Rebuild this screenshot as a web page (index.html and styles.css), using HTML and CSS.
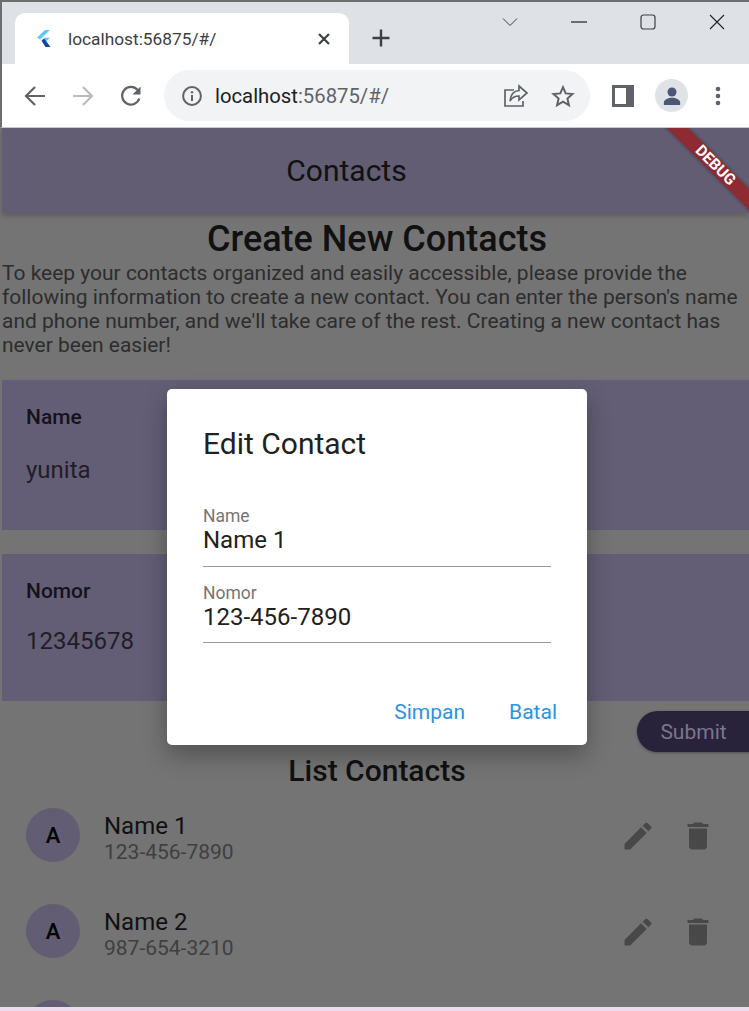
FILE: index.html
```html
<!DOCTYPE html>
<html>
  <head>
    <meta name="viewport" content="width=device-width,initial-scale=1.0">
    <title>localhost:56875/#/</title>
    <link rel="stylesheet" href="styles.css">
  </head>
  <body>
    <div class="window">
      <!-- tab strip -->
      <div class="tabstrip">
        <div class="tab">
          <svg class="favicon" width="14" height="18" viewBox="0 0 14 18">
            <polygon points="8,0 13,0 3,9.500 0,7.500" fill="#5cc8f8"/>
            <polygon points="8,7.800 13,7.800 7.500,13 4.500,10.800" fill="#5cc8f8"/>
            <polygon points="4.500,10.800 7.200,8.600 13.500,17 8.500,17" fill="#0d47a1"/>
          </svg>
          <span class="tab-title">localhost:56875/#/</span>
          <svg class="tab-close" width="14" height="14" viewBox="0 0 14 14">
            <path d="M2 2l10 10M12 2L2 12" stroke="#3c4043" stroke-width="2.2" fill="none"/>
          </svg>
        </div>
        <svg class="new-tab" width="20" height="20" viewBox="0 0 20 20">
          <path d="M10 1.500v17M1.500 10h17" stroke="#3c4043" stroke-width="2.400" fill="none"/>
        </svg>
        <div class="window-controls">
          <svg width="16" height="10" viewBox="0 0 16 10"><path d="M1 1.500l7 7 7-7" stroke="#3c4043" fill="none"/></svg>
          <svg width="16" height="2" viewBox="0 0 16 2"><path d="M0 1h16" stroke="#202124" stroke-width="1.200"/></svg>
          <svg width="16" height="16" viewBox="0 0 16 16"><rect x="1" y="1" width="14" height="14" rx="2.500" stroke="#3c4043" stroke-width="1.200" fill="none"/></svg>
          <svg width="16" height="16" viewBox="0 0 16 16"><path d="M1 1l14 14M15 1L1 15" stroke="#202124" stroke-width="1.100" fill="none"/></svg>
        </div>
      </div>

      <!-- toolbar -->
      <div class="toolbar">
        <svg class="nav-icon" width="24" height="24" viewBox="0 0 24 24"><path d="M22 12H3.500M12 3l-9 9 9 9" stroke="#5f6368" stroke-width="2.200" fill="none"/></svg>
        <svg class="nav-icon" width="24" height="24" viewBox="0 0 24 24"><path d="M2 12h18.500M12 3l9 9-9 9" stroke="#b9bbbe" stroke-width="2.200" fill="none"/></svg>
        <svg class="nav-icon" width="24" height="24" viewBox="0 0 24 24"><path d="M20.300 14.500A8.800 8.800 0 1 1 18.600 6" stroke="#5f6368" stroke-width="2.200" fill="none"/><path d="M21.500 2.500v8h-8z" fill="#5f6368"/></svg>
        <div class="omnibox">
          <svg width="22" height="22" viewBox="0 0 22 22"><circle cx="11" cy="11" r="8.900" stroke="#5f6368" stroke-width="2" fill="none"/><path d="M11 10v6" stroke="#5f6368" stroke-width="2"/><circle cx="11" cy="7.200" r="1.200" fill="#5f6368"/></svg>
          <span class="url"><span class="url-host">localhost</span>:56875/#/</span>
          <svg class="share" width="26" height="24" viewBox="0 0 26 24"><path d="M11 6H2v16h18v-5" stroke="#5f6368" stroke-width="1.700" fill="none"/><path d="M16 2l8 7-8 7v-4c-4.500 0-7 1.500-9 5 .500-6 3.500-10 9-10.500z" stroke="#5f6368" stroke-width="1.700" fill="none"/></svg>
          <svg class="star" width="24" height="24" viewBox="0 0 24 24"><path d="M12 3.200l2.700 6.200 6.800.6-5.100 4.500 1.500 6.600-5.900-3.500-5.900 3.500 1.500-6.600-5.100-4.500 6.800-.6z" stroke="#5f6368" stroke-width="2" fill="none"/></svg>
        </div>
        <svg class="side-panel" width="22" height="22" viewBox="0 0 22 22"><path d="M0 0h22v22H0z" fill="#5f6368"/><path d="M3 3h11v16H3z" fill="#fff"/></svg>
        <div class="profile">
          <svg width="20" height="18" viewBox="0 0 22 20"><circle cx="11" cy="5.500" r="5" fill="#4b5a73"/><path d="M2 20v-3c0-3 5-5 9-5s9 2 9 5v3z" fill="#4b5a73"/></svg>
        </div>
        <svg class="menu" width="6" height="20" viewBox="0 0 6 20"><circle cx="3" cy="3" r="2.300" fill="#5f6368"/><circle cx="3" cy="10" r="2.300" fill="#5f6368"/><circle cx="3" cy="17" r="2.300" fill="#5f6368"/></svg>
      </div>

      <!-- flutter app, dimmed by the dialog barrier -->
      <div class="app">
        <header class="appbar">
          <span class="appbar-title">Contacts</span>
        </header>
        <div class="debug-corner"><div class="debug-ribbon">DEBUG</div></div>

        <h1 class="page-title">Create New Contacts</h1>
        <p class="intro">To keep your contacts organized and easily accessible, please provide the<br>following information to create a new contact. You can enter the person's name<br>and phone number, and we'll take care of the rest. Creating a new contact has<br>never been easier!</p>

        <div class="field-card field-card-name">
          <div class="field-label">Name</div>
          <div class="field-value">yunita</div>
        </div>
        <div class="field-card field-card-number">
          <div class="field-label">Nomor</div>
          <div class="field-value">12345678</div>
        </div>

        <div class="submit-row"><button class="submit-btn">Submit</button></div>

        <h2 class="list-title">List Contacts</h2>
        <ul class="contacts">
          <li class="contact">
            <div class="avatar">A</div>
            <div class="contact-text">
              <div class="contact-name">Name 1</div>
              <div class="contact-phone">123-456-7890</div>
            </div>
            <svg class="icon-edit" width="36" height="36" viewBox="0 0 24 24"><path d="M3 17.250V21h3.750L17.810 9.940l-3.750-3.750zM20.710 7.040a1 1 0 0 0 0-1.410l-2.340-2.340a1 1 0 0 0-1.410 0l-1.830 1.830 3.750 3.750z" fill="#484848"/></svg>
            <svg class="icon-delete" width="36" height="36" viewBox="0 0 24 24"><path d="M6 19c0 1.100.9 2 2 2h8c1.100 0 2-.9 2-2V7H6zM19 4h-3.500l-1-1h-5l-1 1H5v2h14z" fill="#484848"/></svg>
          </li>
          <li class="contact">
            <div class="avatar">A</div>
            <div class="contact-text">
              <div class="contact-name">Name 2</div>
              <div class="contact-phone">987-654-3210</div>
            </div>
            <svg class="icon-edit" width="36" height="36" viewBox="0 0 24 24"><path d="M3 17.250V21h3.750L17.810 9.940l-3.750-3.750zM20.710 7.040a1 1 0 0 0 0-1.410l-2.340-2.340a1 1 0 0 0-1.410 0l-1.830 1.830 3.750 3.750z" fill="#484848"/></svg>
            <svg class="icon-delete" width="36" height="36" viewBox="0 0 24 24"><path d="M6 19c0 1.100.9 2 2 2h8c1.100 0 2-.9 2-2V7H6zM19 4h-3.500l-1-1h-5l-1 1H5v2h14z" fill="#484848"/></svg>
          </li>
          <li class="contact">
            <div class="avatar"></div>
          </li>
        </ul>

        <div class="dialog">
          <div class="dialog-title">Edit Contact</div>
          <div class="dialog-field dialog-field-first">
            <div class="dialog-label">Name</div>
            <div class="dialog-value">Name 1</div>
          </div>
          <div class="dialog-field">
            <div class="dialog-label">Nomor</div>
            <div class="dialog-value">123-456-7890</div>
          </div>
          <div class="dialog-actions">
            <span class="dialog-action">Simpan</span>
            <span class="dialog-action">Batal</span>
          </div>
        </div>
      </div>
      <div class="bottom-strip"></div>
    </div>
  </body>
</html>
```

FILE: styles.css
```css
* { box-sizing: border-box; }

body { margin: 0; background: #fff; font-family: Roboto, "Liberation Sans", sans-serif; }

.window { width: 749px; height: 1011px; display: flex; flex-direction: column; overflow: hidden; border-top: 2px solid #6d6e70; }

/* browser chrome */
.tabstrip { height: 62px; flex: none; background: #dee1e6; display: flex; align-items: flex-start; padding-left: 15px; border-left: 2px solid #6d6e70; }
.tab { width: 334px; height: 51px; margin-top: 11px; background: #fff; border-radius: 10px 10px 0 0; display: flex; align-items: center; padding: 0 18px 0 22px; margin-left: -2px; }
.favicon { flex: none; margin-top: 1px; }
.tab-title { margin-left: 17px; font-size: 17.300px; color: #3c4043; flex: 1; }
.tab-close { flex: none; }
.new-tab { flex: none; margin: 26px 0 0 22px; }
.window-controls { display: flex; align-items: center; justify-content: flex-end; gap: 53px; margin-left: auto; height: 40px; padding-right: 24px; }

.toolbar { height: 64px; flex: none; background: #fff; display: flex; align-items: center; padding-left: 21px; border-left: 2px solid #6d6e70; border-bottom: 1px solid #c8c9cb; }
.nav-icon { flex: none; margin-right: 24px; }
.omnibox { width: 426px; height: 51px; margin-left: -3px; background: #f1f3f4; border-radius: 26px; display: flex; align-items: center; padding: 0 15px 0 17px; flex: none; }
.url { margin-left: 12px; font-size: 20.300px; color: #5f6368; flex: 1; }
.url-host { color: #202124; }
.share { flex: none; margin-right: 22px; }
.star { flex: none; }
.side-panel { flex: none; margin-left: 22px; }
.profile { width: 33px; height: 33px; border-radius: 50%; background: #dfe2e7; margin-left: 21px; flex: none; display: flex; align-items: center; justify-content: center; }
.menu { flex: none; margin-left: 27px; }

/* app */
.app { position: relative; flex: 1; min-height: 0; overflow: hidden; background: #747474; padding-left: 2px; }
.appbar { height: 85px; padding: 0 58px 0 0; background: #625d73; display: flex; align-items: center; justify-content: center; box-shadow: 0 3px 5px rgba(0, 0, 0, 0.2); }
.appbar-title { font-size: 30px; color: #111; margin-top: -1px; }

.debug-corner { position: absolute; top: 0; right: 0; width: 100px; height: 100px; overflow: hidden; }
.debug-ribbon { position: absolute; top: 29px; left: -5px; width: 140px; height: 15px; padding-left: 3px; transform: rotate(45deg); background: #8e2a32; color: #fff; font-size: 15.500px; font-weight: 700; line-height: 15px; text-align: center; box-shadow: 0 0 4px rgba(0, 0, 0, 0.35); }

.page-title { margin: 5px 0 0; padding-left: 3px; font-size: 36px; line-height: 43px; font-weight: 500; color: #111; text-align: center; }
.intro { margin: 0; font-size: 20.970px; line-height: 24px; color: #2d2d2d; }

.field-card { background: #635e75; padding-left: 24px; }
.field-card-name { height: 150px; margin-top: 23px; padding-top: 24px; }
.field-card-number { height: 147px; margin-top: 24px; padding-top: 24px; }
.field-label { font-size: 21px; line-height: 26px; font-weight: 500; color: #14121c; }
.field-value { font-size: 24px; line-height: 30px; color: #1f1d27; }
.field-card-name .field-value { margin-top: 25px; }
.field-card-number .field-value { margin-top: 22px; }

.submit-row { display: flex; justify-content: flex-end; margin-top: 10px; height: 41px; margin-right: -20px; }
.submit-btn { border: none; background: #28223a; color: #7c768c; font-family: inherit; font-size: 21px; width: 132px; height: 41px; border-radius: 21px; padding: 0 19px 0 0; box-shadow: 0 1px 3px rgba(0, 0, 0, 0.3); }

.list-title { margin: 0 0 -3px; padding-left: 3px; font-size: 30px; line-height: 38px; font-weight: 500; color: #111; text-align: center; }

.contacts { list-style: none; margin: 0; padding: 0; }
.contact { height: 96px; display: flex; align-items: center; padding-left: 24px; padding-right: 33px; }
.avatar { width: 54px; height: 54px; border-radius: 50%; background: #625d73; color: #000; font-size: 22px; font-weight: 500; display: flex; align-items: center; justify-content: center; flex: none; }
.contact-text { margin-left: 24px; margin-top: 8px; flex: 1; }
.contact-name { font-size: 24px; line-height: 27px; color: #111; }
.contact-phone { font-size: 21px; line-height: 25px; color: #3f3f3f; }
.icon-edit { flex: none; margin-right: 24px; margin-top: 1px; }
.icon-delete { flex: none; margin-top: 1px; }

/* dialog sits over everything else */
.dialog { position: absolute; left: 167px; top: 261px; width: 420px; height: 356px; background: #fff; border-radius: 5px; box-shadow: 0 10px 24px rgba(0, 0, 0, 0.3); padding: 37px 36px 0 36px; color: #212121; }
.dialog-title { font-size: 30px; line-height: 36px; }
.dialog-field { height: 76px; padding-top: 15px; border-bottom: 1px solid #999; }
.dialog-field-first { margin-top: 43px; height: 62px; padding-top: 0; }
.dialog-label { font-size: 17.500px; line-height: 20px; padding-top: 1px; height: 21px; color: #757575; }
.dialog-value { font-size: 24px; line-height: 28px; }
.dialog-actions { display: flex; justify-content: flex-end; gap: 44px; margin-right: -6px; margin-top: 55px; }
.dialog-action { font-size: 21px; line-height: 28px; color: #2d93e2; }

.bottom-strip { height: 4px; flex: none; background: #eedcee; }
```
